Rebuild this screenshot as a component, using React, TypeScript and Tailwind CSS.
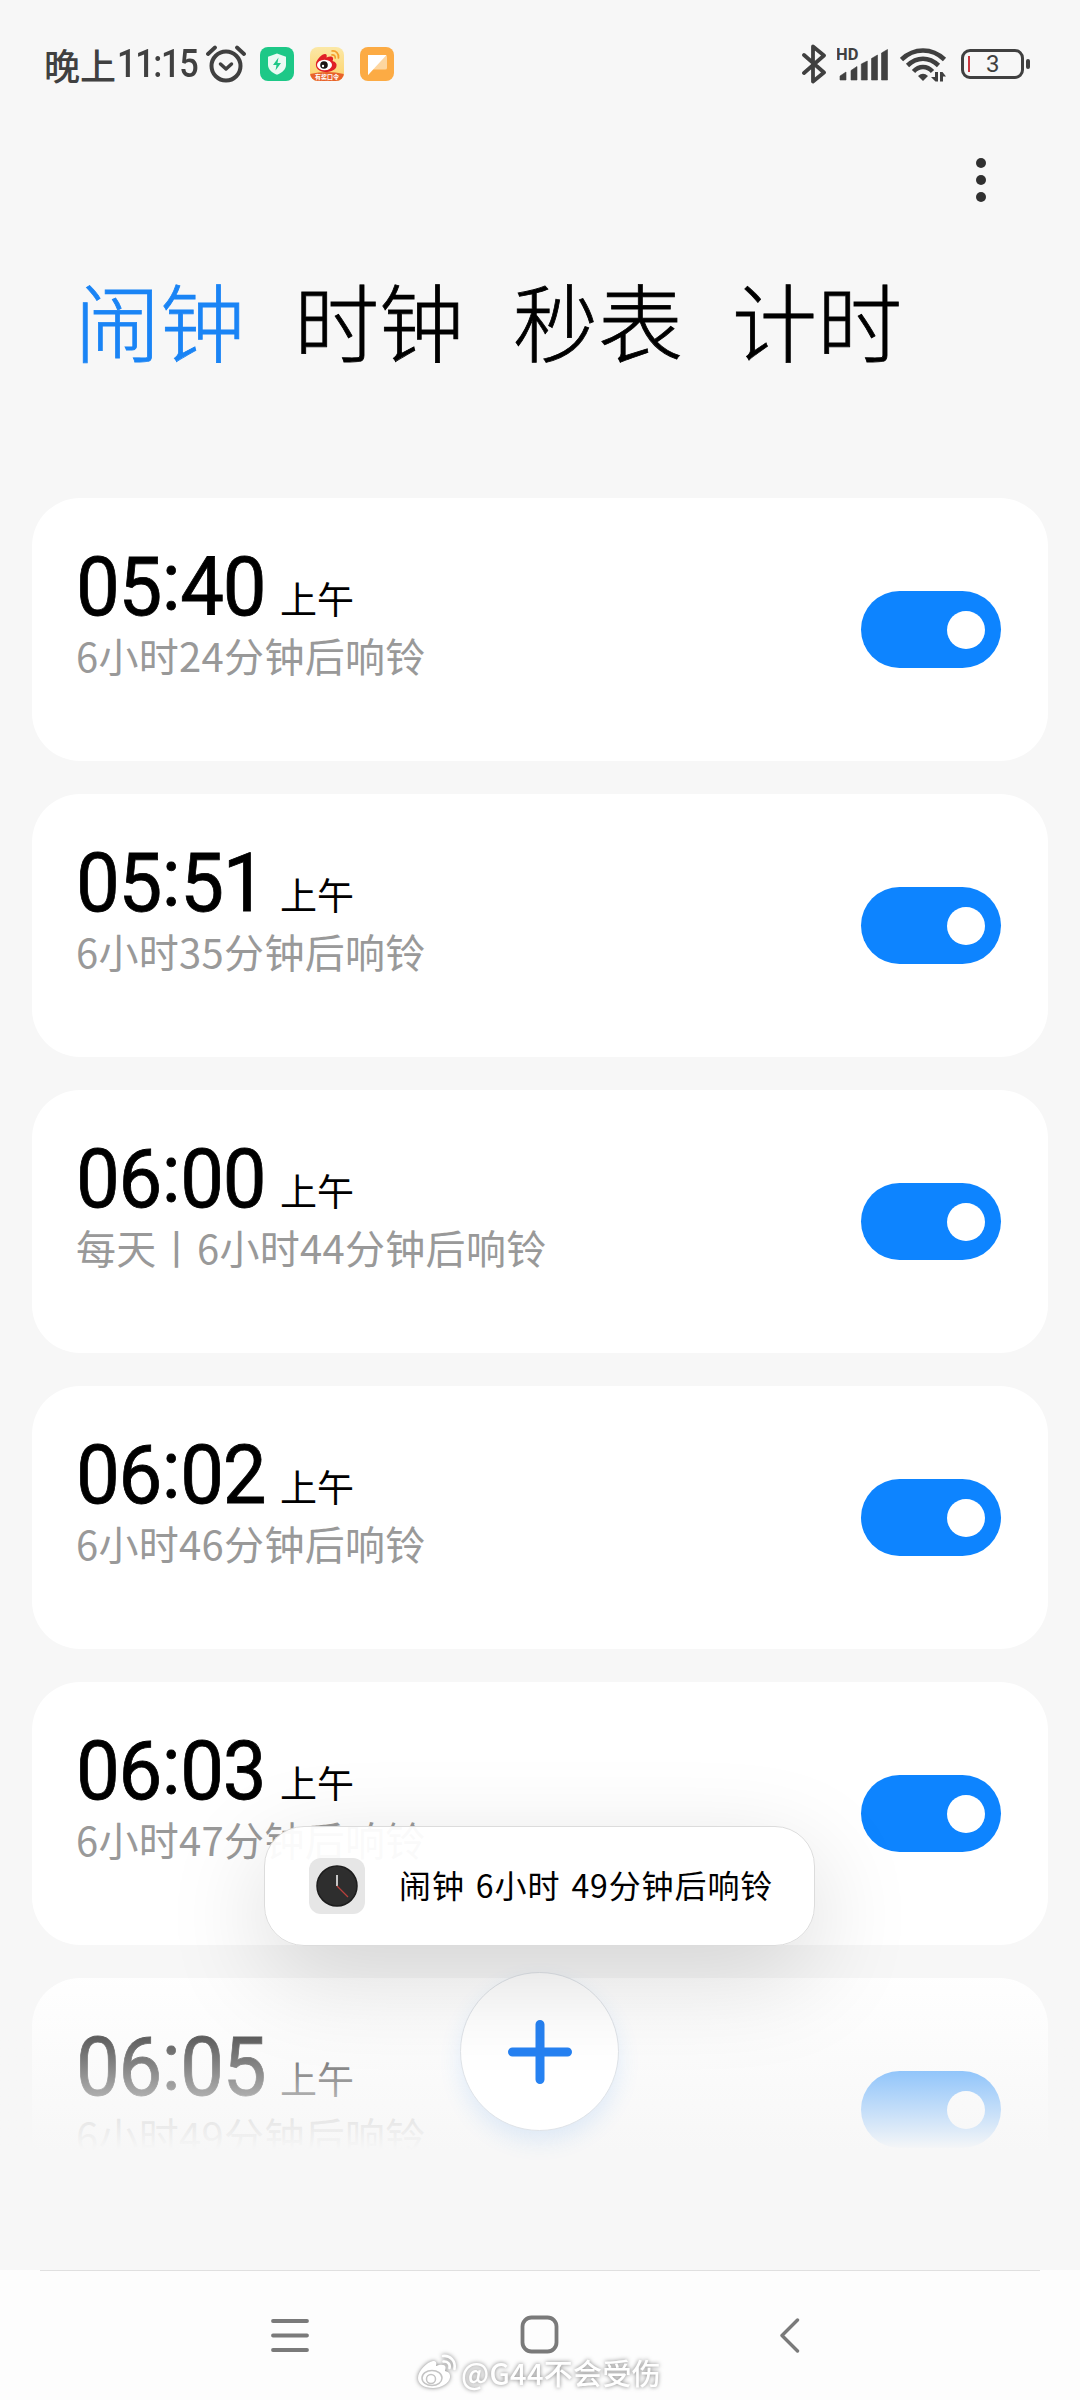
import React from 'react';

interface Alarm {
  time: string;
  period: string;
  note: string;
}

const tabs = ['闹钟', '时钟', '秒表', '计时'];

const alarms: Alarm[] = [
  { time: '05:40', period: '上午', note: '6小时24分钟后响铃' },
  { time: '05:51', period: '上午', note: '6小时35分钟后响铃' },
  { time: '06:00', period: '上午', note: '每天丨6小时44分钟后响铃' },
  { time: '06:02', period: '上午', note: '6小时46分钟后响铃' },
  { time: '06:03', period: '上午', note: '6小时47分钟后响铃' },
  { time: '06:05', period: '上午', note: '6小时49分钟后响铃' },
];

const WeiboEye: React.FC = () => (
  <svg width="34" height="34" viewBox="0 0 34 34">
    <defs>
      <linearGradient id="weiboBg" x1="0" y1="0" x2="0" y2="1">
        <stop offset="0" stopColor="#fbe8a6" />
        <stop offset="1" stopColor="#fdd26a" />
      </linearGradient>
      <clipPath id="weiboClip">
        <rect width="34" height="34" rx="8" />
      </clipPath>
    </defs>
    <g clipPath="url(#weiboClip)">
      <rect width="34" height="34" fill="url(#weiboBg)" />
      <path d="M0 27 Q17 23 34 27 V34 H0 Z" fill="#e8622a" />
      <path d="M6 16c1-4 6-9 9-9 2 0 2 2 1.500 3.500 3-1.500 6-1.500 6.500.5.300 1 0 2-.5 3 3 1 4.500 2.500 4 5-.6 4-6 6-11.500 6C9.500 25 5 21.500 6 16z" fill="#e01f26" />
      <ellipse cx="14.500" cy="18" rx="7.500" ry="5.200" fill="#fff" />
      <circle cx="14" cy="18" r="3.800" fill="#1c1414" />
      <circle cx="13" cy="19" r="1.200" fill="#fff" />
      <path d="M22 4c4-.5 7 2.500 6.500 7M22 7.800c2.200-.2 3.500 1.200 3.200 3.200" fill="none" stroke="#f4a02c" strokeWidth="1.700" strokeLinecap="round" />
      <text x="17" y="31.500" fontSize="6" fontWeight="700" textAnchor="middle" fill="#fff" className="font-['Noto_Sans_CJK_SC',sans-serif]">有奖口令</text>
    </g>
  </svg>
);

const StatusBar: React.FC = () => (
  <header className="flex h-[127px] items-start justify-between pl-[44px] pr-[50px] pt-[43px] text-[#404040]">
    <div className="flex h-[42px] items-center">
      <span className="flex w-[155px] items-center whitespace-nowrap text-[36px] font-medium leading-[42px]">
        晚上
        <span className="ml-px inline-block origin-left scale-x-[0.88] font-[Roboto] text-[39px] tracking-[-1.500px]">11:15</span>
      </span>
      <svg className="ml-[7px] shrink-0" width="40" height="38" viewBox="0 0 40 38" fill="none" stroke="#404040" strokeLinecap="round" strokeLinejoin="round">
        <circle cx="20" cy="21" r="14.500" strokeWidth="4" />
        <path d="M14.500 19l5.500 5 5.500-5" strokeWidth="3.500" />
        <path d="M2 9l7-6.500M38 9l-7-6.500" strokeWidth="3.800" />
      </svg>
      <svg className="ml-[14px]" width="34" height="34" viewBox="0 0 34 34">
        <rect width="34" height="34" rx="8" fill="#1dc887" />
        <path d="M17 6.500l9 3.300v8c0 4.700-4 8-9 10-5-2-9-5.300-9-10v-8z" fill="#eafaf3" />
        <path d="M18.500 10.500l-5.500 7.500h3.500l-1 5.500 5.500-7.500h-3.500z" fill="#1dc887" />
      </svg>
      <div className="ml-4">
        <WeiboEye />
      </div>
      <svg className="ml-4" width="34" height="34" viewBox="0 0 34 34">
        <rect width="34" height="34" rx="8" fill="#fcab44" />
        <path d="M8 8h17q2 0 2 2v11q0 1.500-2 1.500H13L8 28z" fill="#fdd6a0" />
        <path d="M8 8h18.500L8 28z" fill="#fff" />
      </svg>
    </div>

    <div className="flex h-[42px] items-center">
      <svg width="26" height="40" viewBox="0 0 26 40" fill="none" stroke="#404040" strokeWidth="3.800" strokeLinecap="round" strokeLinejoin="round">
        <path d="M3 11l20 17.500-11 9V2.500l11 9L3 29" />
      </svg>
      <svg className="ml-[10px]" width="52" height="36" viewBox="0 0 52 36" fill="#404040">
        <text x="-1" y="13.500" fontSize="16.500" fontWeight="700" className="font-[Roboto]">HD</text>
        <path d="M3 34v-4l6-4v8zM14 34V24.500l6-4V34zM24.300 34V18l6-3V34zM34.500 34V12.500l6-3.500V34zM44.500 34V7l6-3.500V34z" stroke="#404040" strokeWidth=".6" strokeLinejoin="round" />
      </svg>
      <svg className="ml-[11px]" width="47" height="37" viewBox="0 0 47 37" fill="none" stroke="#404040" strokeWidth="4.600">
        <path d="M1.500 13.500C14 1.500 32 1.500 44.500 13.500" />
        <path d="M7.500 19.500C17 10.500 29 10.500 38.500 19.500" />
        <path d="M13.500 25.500C19 19.500 27 19.500 32.500 25.500" />
        <path d="M18 30q5-4.500 10 0l-5 5z" fill="#404040" stroke="none" />
        <path d="M38 26v9.500h-2.500L31 31h4v-5zM40 35.500V26h2.500l3.500 4.500h-3v5z" fill="#404040" stroke="none" />
      </svg>
      <div className="ml-[14px] flex h-[30px] w-[63px] items-center rounded-[9px] border-[3px] border-[#404040] pl-[4px]">
        <span className="h-4 w-[2px] bg-[#c8373f]" />
        <span className="ml-[16px] font-[Roboto] text-[24px] leading-none">3</span>
      </div>
      <span className="ml-[2px] h-[10px] w-[4px] rounded-sm bg-[#404040]" />
    </div>
  </header>
);

const AlarmTime: React.FC<{ time: string }> = ({ time }) => {
  const [hours, minutes] = time.split(':');
  return (
    <span className="relative top-px inline-block w-[204px] origin-left scale-x-[0.95] whitespace-nowrap font-[Roboto] text-[82px] leading-[80px] tracking-[-1.400px] [-webkit-text-stroke:0.8px]">
      {hours}
      <span className="relative -top-[5px] mx-px">:</span>
      {minutes}
    </span>
  );
};

const AlarmCard: React.FC<{ alarm: Alarm }> = ({ alarm }) => (
  <li className="flex h-[263px] items-center justify-between rounded-[48px] bg-white pl-[44px] pr-[47px]">
    <div className="-mt-[33px]">
      <div className="flex items-baseline">
        <AlarmTime time={alarm.time} />
        <span className="text-[37px] leading-[50px]">{alarm.period}</span>
      </div>
      <p className="mt-[4px] text-[40px] leading-[50px] tracking-[0.300px] text-[#999]">{alarm.note}</p>
    </div>
    <button className="flex h-[77px] w-[140px] items-center justify-end rounded-full bg-[#0d84ff] pr-4">
      <span className="size-[38px] rounded-full bg-white" />
    </button>
  </li>
);

const Toast: React.FC = () => (
  <div className="absolute left-[264px] top-[1826px] flex h-[120px] w-[551px] items-center rounded-[40px] border border-[#dcdcdc] bg-white/95 pl-[44px] shadow-[0_30px_100px_rgba(0,0,0,0.15)]">
    <svg width="56" height="56" viewBox="0 0 56 56">
      <rect width="56" height="56" rx="12" fill="#e6e6e6" />
      <circle cx="28" cy="28" r="20" fill="#2e2e2e" stroke="#1d1d1d" strokeWidth="1.500" />
      <path d="M28 17v11" stroke="#d8d8d8" strokeWidth="1.800" />
      <path d="M28 28l11 11" stroke="#b8403c" strokeWidth="1.300" />
    </svg>
    <span className="-mt-1 ml-[34px] whitespace-nowrap text-[32px] leading-none tracking-[0.900px] [word-spacing:3px]">闹钟 6小时 49分钟后响铃</span>
  </div>
);

const NavBar: React.FC = () => (
  <nav className="h-[130px] bg-[#fdfdfd]">
    <div className="mx-10 h-px bg-[#e0e0e0]" />
    <div className="flex h-[129px] pl-[270px] pt-[44px]">
      <svg width="40" height="40" viewBox="0 0 40 40" stroke="#7a7a7a" strokeWidth="3.800" strokeLinecap="round">
        <path d="M3 6h34M3 20.500h34M3 35h34" />
      </svg>
      <svg className="ml-[209px]" width="40" height="40" viewBox="0 0 40 40" fill="none" stroke="#7a7a7a" strokeWidth="3.800">
        <rect x="3.500" y="2.500" width="34" height="34" rx="9" />
      </svg>
      <svg className="ml-[221px]" width="20" height="40" viewBox="0 0 20 40" fill="none" stroke="#7a7a7a" strokeWidth="3.400" strokeLinecap="round" strokeLinejoin="round">
        <path d="M17.500 5L2 20.500 17.500 36" />
      </svg>
    </div>
  </nav>
);

const Watermark: React.FC = () => (
  <div className="absolute left-[416px] top-[2353px] flex items-center drop-shadow-[0_0_2px_rgba(0,0,0,0.5)]">
    <svg width="42" height="38" viewBox="0 0 42 38" fill="none">
      <path d="M2 25c0-7 9-16 15-17 3-.3 4 2 3 5 5-2 9-1.500 9.500 1 .3 1.500-.5 3-.5 4 4 1 5.500 3 5 6.500-1 6-9 10.500-17 10.500C8 35 2 31 2 25z" fill="#fff" />
      <ellipse cx="16" cy="25" rx="10" ry="7.500" stroke="#c4c4c4" strokeWidth="1.500" />
      <circle cx="15" cy="26" r="4.500" stroke="#c4c4c4" strokeWidth="1.500" />
      <path d="M27 3c7-1 13 5 11.500 13M27.500 8.500c4-.5 7 2.500 6 6.500" stroke="#fff" strokeWidth="2.600" strokeLinecap="round" />
    </svg>
    <span className="ml-[3px] whitespace-nowrap text-[29px] font-medium leading-[38px] tracking-[0.300px] text-white">@G44不会受伤</span>
  </div>
);

const App: React.FC = () => {
  return (
    <div className="relative flex h-[2400px] w-[1080px] flex-col overflow-hidden bg-[#f7f7f7] font-['Noto_Sans_CJK_SC',sans-serif] text-black">
      <StatusBar />

      <div className="flex justify-end pr-[94px] pt-[31px]">
        <div className="flex flex-col gap-[7px]">
          <span className="size-[10px] rounded-full bg-[#303030]" />
          <span className="size-[10px] rounded-full bg-[#303030]" />
          <span className="size-[10px] rounded-full bg-[#303030]" />
        </div>
      </div>

      <div className="flex gap-[49px] pl-[75px] pt-[67px] text-[85px] font-light leading-[100px] [-webkit-text-stroke:0.8px]">
        {tabs.map((tab, index) => (
          <span key={tab} className={index === 0 ? 'text-[#1a84f5]' : ''}>{tab}</span>
        ))}
      </div>

      <main className="relative mt-[129px] h-[1772px] overflow-hidden px-8">
        <ul className="flex flex-col gap-[33px]">
          {alarms.map((alarm) => (
            <AlarmCard key={alarm.time} alarm={alarm} />
          ))}
        </ul>
        {/* fades the list out behind the add button */}
        <div className="absolute inset-x-0 bottom-0 flex h-[302px] flex-col">
          <div className="h-[182px] bg-gradient-to-b from-[#f7f7f7]/0 to-[#f7f7f7]" />
          <div className="flex-1 bg-[#f7f7f7]" />
        </div>
      </main>

      <NavBar />

      <button className="absolute left-[460px] top-[1972px] flex size-[159px] items-center justify-center rounded-full border border-[#dfe3e8] bg-white shadow-[0_10px_22px_rgba(38,130,240,0.12)]">
        <svg width="66" height="66" viewBox="0 0 66 66" stroke="#2682f2" strokeWidth="9" strokeLinecap="round">
          <path d="M33 5.500v55M5.500 33h55" />
        </svg>
      </button>

      <Toast />
      <Watermark />
    </div>
  );
};

export default App;
